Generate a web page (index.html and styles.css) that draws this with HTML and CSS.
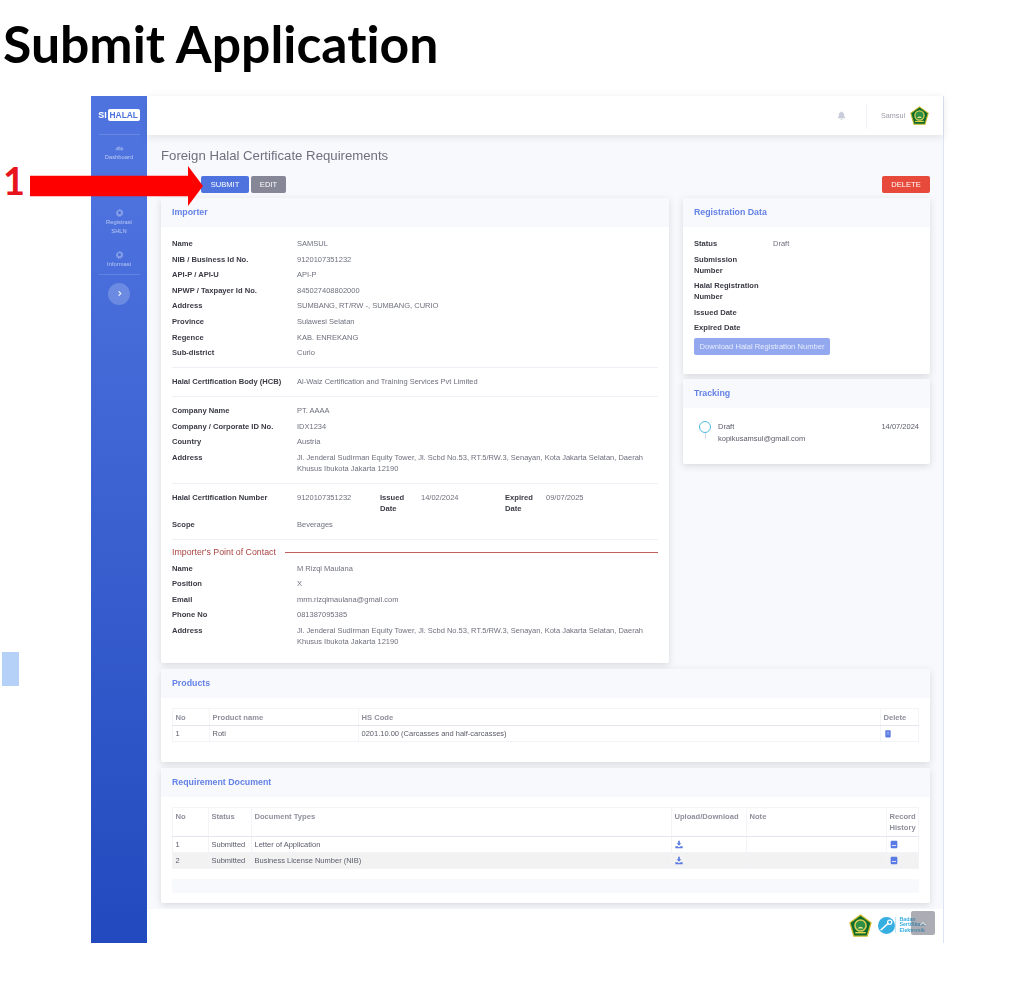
FILE: index.html
```html
<!DOCTYPE html>
<html lang="en">
<head>
  <meta charset="UTF-8" />
  <title>Submit Application</title>
  <link rel="stylesheet" href="styles.css">
</head>
<body>
  <svg class="defs" width="0" height="0">
    <symbol id="emblem" viewBox="0 0 24 24">
      <path d="M12 1 23 9 19 23H5L1 9Z" fill="#0d6a2c" stroke="#cdbb2c" stroke-width="1.3"/>
      <circle cx="12" cy="12" r="6.6" fill="#d9cf55"/>
      <circle cx="12" cy="12" r="5" fill="#2f8f45"/>
      <path d="M9 15a3.5 3.5 0 0 1 6 0Z" fill="#efe58a"/>
      <path d="M6.500 19.500h11" stroke="#e3d64c" stroke-width="1.500"/>
    </symbol>
    <symbol id="gear" viewBox="0 0 16 16">
      <path d="M8 1l1.300 2 2.300-.6.6 2.300 2.300.7-.7 2.100 1.300 1.500-1.700 1.500.4 2.300-2.300.4-1 2.100L8 14.500 5.900 15.900l-1-2.100-2.300-.4.4-2.300L1.300 9.600 2.600 8.100 1.900 6l2.300-.7.6-2.300 2.300.6Z"/>
      <circle cx="8" cy="8.500" r="2.600" fill="#4a6cd9"/>
    </symbol>
    <symbol id="book" viewBox="0 0 12 12">
      <rect x="1" y="0.500" width="10" height="11" rx="1.500"/>
      <path d="M3 7.500h6" stroke="#fff" stroke-width="1.200"/>
    </symbol>
    <symbol id="download" viewBox="0 0 12 12">
      <path d="M4.700 0.500h2.600v3.500h2.200L6 8 2.500 4h2.200Z"/>
      <path d="M0.500 8.800h3.200L6 10l2.300-1.200h3.200v2.700h-11Z"/>
    </symbol>
  </svg>

  <h1 class="slide-title">Submit Application</h1>

  <div class="shot">
    <aside class="sidebar">
      <div class="brand">SI<span class="brand-box">HALAL</span></div>
      <hr class="side-rule">
      <a class="side-link">
        <svg class="side-icon" viewBox="0 0 16 16"><path d="M1 13a7 7 0 1 1 14 0Z"/><path d="M8 11 11 6" stroke="#4e73df" stroke-width="1.300"/></svg>
        <span>Dashboard</span>
      </a>
      <a class="side-link side-link-reg">
        <svg class="side-icon"><use href="#gear"/></svg>
        <span>Registrasi SHLN</span>
      </a>
      <a class="side-link side-link-info">
        <svg class="side-icon"><use href="#gear"/></svg>
        <span>Informasi</span>
      </a>
      <hr class="side-rule side-rule-low">
      <button class="side-toggle">
        <svg viewBox="0 0 8 8" width="7" height="7"><path d="M3 1.500 5.500 4 3 6.500" fill="none" stroke="#fff" stroke-width="1.200"/></svg>
      </button>
    </aside>

    <div class="main">
      <header class="topbar">
        <svg class="bell" viewBox="0 0 12 12"><path d="M6 .5c.5 0 1 .4 1 1 1.700.4 2.500 1.800 2.500 3.500 0 2 .5 3 1.300 3.800V9.500H1.200v-.7C2 8 2.500 7 2.500 5c0-1.700.8-3.100 2.500-3.500 0-.6.500-1 1-1Z"/><path d="M4.500 10.200h3a1.500 1.500 0 0 1-3 0Z"/></svg>
        <span class="topbar-rule"></span>
        <span class="user-name">Samsul</span>
        <svg class="user-logo"><use href="#emblem"/></svg>
      </header>

      <div class="content">
        <h2 class="page-title">Foreign Halal Certificate Requirements</h2>

        <div class="actions">
          <button class="btn btn-blue">SUBMIT</button>
          <button class="btn btn-gray">EDIT</button>
          <button class="btn btn-red">DELETE</button>
        </div>

        <div class="columns">
          <section class="card card-importer">
            <div class="card-head">Importer</div>
            <div class="card-body">
              <div class="row"><b>Name</b><span>SAMSUL</span></div>
              <div class="row"><b>NIB / Business Id No.</b><span>9120107351232</span></div>
              <div class="row"><b>API-P / API-U</b><span>API-P</span></div>
              <div class="row"><b>NPWP / Taxpayer Id No.</b><span>845027408802000</span></div>
              <div class="row"><b>Address</b><span>SUMBANG, RT/RW -, SUMBANG, CURIO</span></div>
              <div class="row"><b>Province</b><span>Sulawesi Selatan</span></div>
              <div class="row"><b>Regence</b><span>KAB. ENREKANG</span></div>
              <div class="row"><b>Sub-district</b><span>Curio</span></div>
              <hr class="rule">
              <div class="row"><b>Halal Certification Body (HCB)</b><span>Al-Waiz Certification and Training Services Pvt Limited</span></div>
              <hr class="rule">
              <div class="row"><b>Company Name</b><span>PT. AAAA</span></div>
              <div class="row"><b>Company / Corporate ID No.</b><span>IDX1234</span></div>
              <div class="row"><b>Country</b><span>Austria</span></div>
              <div class="row"><b>Address</b><span>Jl. Jenderal Sudirman Equity Tower, Jl. Scbd No.53, RT.5/RW.3, Senayan, Kota Jakarta Selatan, Daerah Khusus Ibukota Jakarta 12190</span></div>
              <hr class="rule">
              <div class="row row-cert">
                <b>Halal Certification Number</b><span>9120107351232</span>
                <b>Issued Date</b><span>14/02/2024</span>
                <b>Expired Date</b><span>09/07/2025</span>
              </div>
              <div class="row"><b>Scope</b><span>Beverages</span></div>
              <hr class="rule">
              <div class="contact-title"><span>Importer's Point of Contact</span></div>
              <div class="row"><b>Name</b><span>M Rizqi Maulana</span></div>
              <div class="row"><b>Position</b><span>X</span></div>
              <div class="row"><b>Email</b><span>mrm.rizqimaulana@gmail.com</span></div>
              <div class="row"><b>Phone No</b><span>081387095385</span></div>
              <div class="row"><b>Address</b><span>Jl. Jenderal Sudirman Equity Tower, Jl. Scbd No.53, RT.5/RW.3, Senayan, Kota Jakarta Selatan, Daerah Khusus Ibukota Jakarta 12190</span></div>
            </div>
          </section>

          <div class="side-cards">
            <section class="card card-reg">
              <div class="card-head">Registration Data</div>
              <div class="card-body reg-body">
                <div class="row"><b>Status</b><span>Draft</span></div>
                <div class="row"><b>Submission Number</b><span></span></div>
                <div class="row"><b>Halal Registration Number</b><span></span></div>
                <div class="row"><b>Issued Date</b><span></span></div>
                <div class="row"><b>Expired Date</b><span></span></div>
                <button class="btn btn-light">Download Halal Registration Number</button>
              </div>
            </section>
            <section class="card card-track">
              <div class="card-head">Tracking</div>
              <div class="track">
                <div class="track-mark"><i class="track-dot"></i><i class="track-line"></i></div>
                <div class="track-text">Draft<br>kopikusamsul@gmail.com</div>
                <div class="track-date">14/07/2024</div>
              </div>
            </section>
          </div>
        </div>

        <section class="card card-products">
          <div class="card-head">Products</div>
          <div class="table-wrap">
            <table class="table">
              <colgroup><col class="w-37"><col class="w-149"><col><col class="w-38"></colgroup>
              <thead><tr><th>No</th><th>Product name</th><th>HS Code</th><th>Delete</th></tr></thead>
              <tbody>
                <tr><td>1</td><td>Roti</td><td>0201.10.00 (Carcasses and half-carcasses)</td>
                  <td><svg class="tbl-icon" viewBox="0 0 12 12"><path d="M2.500 1h7l.5 1v9l-1 1H3l-1-1V2Z"/><path d="M4 4.500h4M4 7h4" stroke="#fff" stroke-width=".6"/></svg></td></tr>
              </tbody>
            </table>
          </div>
        </section>

        <section class="card card-docs">
          <div class="card-head">Requirement Document</div>
          <div class="table-wrap">
            <table class="table">
              <colgroup><col class="w-36"><col class="w-43"><col><col class="w-75"><col class="w-140"><col class="w-32"></colgroup>
              <thead><tr><th>No</th><th>Status</th><th>Document Types</th><th>Upload/Download</th><th>Note</th><th>Record History</th></tr></thead>
              <tbody>
                <tr><td>1</td><td>Submitted</td><td>Letter of Application</td><td><svg class="tbl-icon"><use href="#download"/></svg></td><td></td><td><svg class="tbl-icon"><use href="#book"/></svg></td></tr>
                <tr class="row-alt"><td>2</td><td>Submitted</td><td>Business License Number (NIB)</td><td><svg class="tbl-icon"><use href="#download"/></svg></td><td></td><td><svg class="tbl-icon"><use href="#book"/></svg></td></tr>
              </tbody>
            </table>
            <div class="table-foot"></div>
          </div>
        </section>

        <footer class="footer">
          <svg class="foot-emblem"><use href="#emblem"/></svg>
          <svg class="foot-mark" viewBox="0 0 16 16"><circle cx="8" cy="8" r="8" fill="#35aee2"/><path d="M2.500 12.500 10 5.500" fill="none" stroke="#fff" stroke-width="1.400"/><circle cx="11" cy="5" r="2" fill="none" stroke="#fff" stroke-width="1.200"/></svg>
          <div class="foot-name">Badan<br>Sertifikasi<br>Elektronik</div>
        </footer>
      </div>
    </div>
    <button class="to-top"><svg viewBox="0 0 8 8" width="8" height="8"><path d="M1.500 5 4 2.500 6.500 5" fill="none" stroke="#fff" stroke-width="1"/></svg></button>
  </div>

  <div class="slide-num">1</div>
  <svg class="arrow" viewBox="0 0 173 40" width="173" height="40"><path d="M0 9.700H158V0L173 20 158 40V30.300H0Z" fill="#ff0000"/></svg>
  <div class="slide-mark"></div>
</body>
</html>
```

FILE: styles.css
```css
* {
  box-sizing: border-box;
}

body {
  margin: 0;
  height: 989px;
  overflow: hidden;
  position: relative;
  background: #ffffff;
  font-family: "Liberation Sans", Arial, sans-serif;
  font-size: 7.5px;
  color: #6e707e;
}

.defs {
  position: absolute;
}

.slide-title {
  margin: 0;
  height: 96px;
  padding: 13px 0 0 3px;
  font-family: Lato, sans-serif;
  font-size: 51.700px;
  font-variant-ligatures: none;
  line-height: 60px;
  font-weight: 700;
  color: #000000;
  white-space: nowrap;
}

.shot {
  position: relative;
  display: flex;
  width: 853px;
  height: 847px;
  margin-left: 91px;
  border-right: 1px solid #dfe4f5;
  filter: blur(0.5px);
}

/* sidebar */
.sidebar {
  flex: 0 0 56px;
  display: flex;
  flex-direction: column;
  align-items: center;
  background: linear-gradient(180deg, #4e73df 10%, #224abe 100%);
  color: rgba(255, 255, 255, 0.6);
  font-size: 5.8px;
  text-align: center;
}

.brand {
  display: flex;
  gap: 1px;
  margin-top: 13px;
  font-size: 9px;
  line-height: 12px;
  font-weight: 700;
  color: #ffffff;
  white-space: nowrap;
}

.brand-box {
  width: 32px;
  background: #ffffff;
  color: #4e73df;
  font-size: 8.400px;
  border-radius: 2px;
}

.side-rule {
  width: 41px;
  margin: 13px 0 0;
  border: 0;
  border-top: 1px solid rgba(255, 255, 255, 0.15);
}

.side-rule-low {
  margin-top: 4.500px;
}

.side-link {
  display: flex;
  flex-direction: column;
  align-items: center;
  width: 100%;
  line-height: 9px;
  margin-top: 8px;
  padding: 0 10px;
}

.side-link-reg {
  margin-top: 46px;
}

.side-link-info {
  margin-top: 14px;
}

.side-icon {
  width: 9px;
  height: 9px;
  margin-bottom: 1px;
  fill: rgba(255, 255, 255, 0.32);
}

.side-toggle {
  display: flex;
  align-items: center;
  justify-content: center;
  width: 22px;
  height: 22px;
  margin-top: 8px;
  padding: 0;
  border: 0;
  border-radius: 50%;
  background: rgba(255, 255, 255, 0.2);
}

/* main */
.main {
  flex: 1;
  display: flex;
  flex-direction: column;
  min-width: 0;
  background: #f8f9fc;
}

.topbar {
  flex: 0 0 39px;
  display: flex;
  align-items: center;
  justify-content: flex-end;
  padding-right: 14px;
  background: #ffffff;
  box-shadow: 0 2px 8px rgba(58, 59, 69, 0.12);
  position: relative;
}

.bell {
  width: 9px;
  height: 9px;
  fill: #c9ccdb;
  margin-right: 20px;
}

.topbar-rule {
  width: 1px;
  height: 26px;
  background: #f1f2f7;
  margin-right: 14px;
}

.user-name {
  color: #9a9ba8;
  font-size: 7.2px;
  margin-right: 5px;
}

.user-logo {
  width: 19px;
  height: 19px;
}

.content {
  flex: 1;
  display: flex;
  flex-direction: column;
  padding: 0 13px 0 14px;
  min-height: 0;
}

.page-title {
  margin: 13px 0 0;
  font-size: 13.200px;
  line-height: 16px;
  font-weight: 400;
  color: #6e707e;
}

.actions {
  display: flex;
  gap: 2px;
  margin: 12px 0 5px;
  padding-left: 40px;
}

.btn {
  height: 17px;
  padding: 0 7px;
  border: 0;
  border-radius: 2px;
  font-family: inherit;
  font-size: 7.6px;
  color: #ffffff;
}

.btn-blue {
  width: 48px;
  background: #4e73df;
}

.btn-gray {
  width: 35px;
  background: #858796;
}

.btn-red {
  width: 48px;
  margin-left: auto;
  background: #e74a3b;
}

.btn-light {
  display: block;
  width: 136px;
  padding: 0;
  background: #93a8ef;
  color: #e6ebfb;
  white-space: nowrap;
}

/* cards */
.columns {
  display: flex;
  gap: 14px;
}

.card {
  background: #ffffff;
  border-radius: 2px;
  box-shadow: 0 2px 7px rgba(58, 59, 69, 0.16);
}

.card-head {
  height: 29px;
  padding: 0 11px;
  background: #f8f9fc;
  border-radius: 2px 2px 0 0;
  font-size: 8.8px;
  line-height: 28px;
  font-weight: 700;
  color: #6482e6;
}

.card-importer {
  flex: 0 0 508px;
  height: 465px;
}

.card-body {
  padding: 11px 11px 0;
}

.row {
  display: grid;
  grid-template-columns: 125px 1fr;
  margin-bottom: 4.600px;
  line-height: 11px;
}

.row b {
  color: #3a3b45;
  font-size: 7.6px;
  font-weight: 700;
}

.row span {
  color: #6e707e;
}

.row-cert {
  grid-template-columns: 125px 83px 41px 84px 41px 1fr;
}

.row-cert b {
  padding-right: 6px;
}

.rule {
  margin: 9px 0 8px;
  border: 0;
  border-top: 1px solid #eef0f5;
}

.contact-title {
  display: flex;
  align-items: center;
  gap: 9px;
  margin: -1px 0 5px;
  font-size: 8.800px;
  line-height: 11px;
  color: #a94442;
}

.contact-title::after {
  content: "";
  flex: 1;
  border-top: 1px solid #c0605d;
}

.side-cards {
  flex: 1;
  display: flex;
  flex-direction: column;
  gap: 5px;
}

.card-reg {
  height: 176px;
}

.reg-body .row {
  grid-template-columns: 79px 1fr;
}

.reg-body .row b {
  width: 68px;
}

.card-track {
  height: 85px;
}

.track {
  display: flex;
  padding: 13px 11px 0 16px;
}

.track-mark {
  display: flex;
  flex-direction: column;
  align-items: center;
  width: 12px;
  margin-right: 7px;
}

.track-dot {
  width: 12px;
  height: 12px;
  border: 1.800px solid #4fb9e3;
  border-radius: 50%;
}

.track-line {
  width: 1px;
  height: 6px;
  background: #d7dbe8;
}

.track-text {
  flex: 1;
  line-height: 11.500px;
  color: #5a5c69;
}

.track-date {
  line-height: 11.500px;
  color: #5a5c69;
}

.card-products {
  height: 93px;
  margin-top: 6px;
}

.card-docs {
  height: 135px;
  margin-top: 6px;
}

.table-wrap {
  padding: 10px 11px 0;
}

.table {
  width: 100%;
  table-layout: fixed;
  border-collapse: collapse;
  font-size: 7.500px;
  line-height: 11px;
}

.table th,
.table td {
  padding: 2px 2.500px;
  text-align: left;
  vertical-align: top;
  border: 1px solid #f3f4f8;
}

.table th {
  padding-top: 3px;
  font-size: 7.600px;
  font-weight: 700;
  color: #8f909c;
  border-bottom: 1px solid #e3e6f0;
}

.table td {
  color: #5a5c69;
}

.w-37 { width: 37px; }
.w-149 { width: 149px; }
.w-38 { width: 38px; }
.w-36 { width: 36px; }
.w-43 { width: 43px; }
.w-75 { width: 75px; }
.w-140 { width: 140px; }
.w-32 { width: 32px; }

.card-docs .table thead tr {
  height: 29px;
}

.row-alt td {
  background: #f2f2f3;
}

.tbl-icon {
  display: block;
  width: 8px;
  height: 9px;
  margin-top: 1px;
  fill: #5a7be3;
}

.table-foot {
  height: 14px;
  margin-top: 10px;
  background: #f8f9fc;
}

/* footer */
.footer {
  flex: 1;
  display: flex;
  align-items: center;
  justify-content: flex-end;
  margin: 6px -13px 0 -14px;
  padding: 0 18px 2px 0;
  background: #ffffff;
}

.foot-emblem {
  width: 23px;
  height: 23px;
  margin-right: 6px;
}

.foot-mark {
  width: 17px;
  height: 17px;
}

.foot-name {
  padding-left: 3px;
  border-left: 1px solid #bfe4f5;
  font-size: 5.300px;
  line-height: 5.500px;
  font-weight: 700;
  color: #35aee2;
}

.to-top {
  position: absolute;
  right: 8px;
  bottom: 8px;
  width: 24px;
  height: 24px;
  padding: 0;
  border: 0;
  border-radius: 2px;
  background: rgba(90, 92, 105, 0.5);
}

/* slide annotations */
.slide-num {
  position: absolute;
  left: 3px;
  top: 157px;
  font-family: Lato, sans-serif;
  font-size: 38px;
  line-height: 46px;
  font-weight: 700;
  color: #e8141c;
}

.arrow {
  position: absolute;
  left: 30px;
  top: 166px;
}

.slide-mark {
  position: absolute;
  left: 2px;
  top: 652px;
  width: 17px;
  height: 34px;
  background: #b6d1f7;
}
```
